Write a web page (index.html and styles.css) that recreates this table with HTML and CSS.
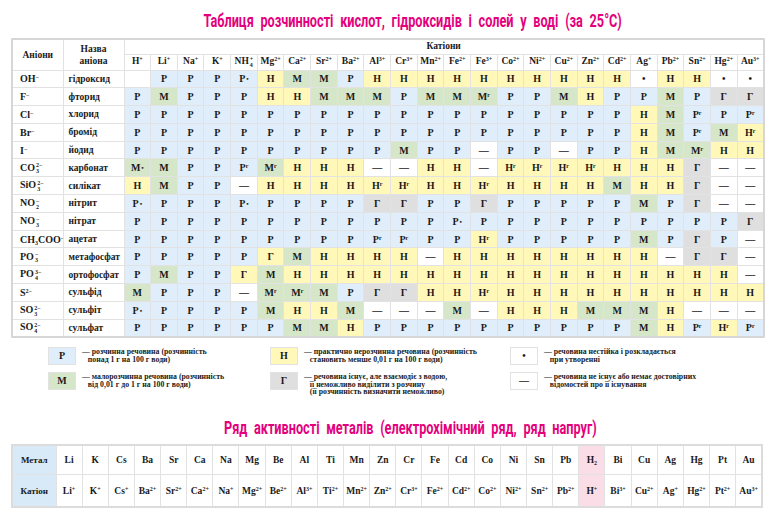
FILE: index.html
```html
<!DOCTYPE html>
<html lang="uk">
<head>
<meta charset="utf-8">
<title>Таблиця розчинності</title>
<link rel="stylesheet" href="styles.css">
</head>
<body>
<div class="page">
  <h1 class="title"><span class="tt">Таблиця розчинності кислот, гідроксидів і солей у воді (за 25°С)</span></h1>
  <table class="sol">
    <colgroup>
      <col class="w-an"><col class="w-nm">
      <col span="24" class="w-c">
    </colgroup>
    <thead>
      <tr class="h1">
        <th rowspan="2" class="an-h">Аніони</th>
        <th rowspan="2" class="nm-h">Назва<br>аніона</th>
        <th colspan="24" class="cat-h">Катіони</th>
      </tr>
      <tr class="h2">
        <th>H<sup>+</sup></th><th>Li<sup>+</sup></th><th>Na<sup>+</sup></th><th>K<sup>+</sup></th>
        <th>NH<span class="st"><span>+</span><span>4</span></span></th>
        <th>Mg<sup>2+</sup></th><th>Ca<sup>2+</sup></th><th>Sr<sup>2+</sup></th><th>Ba<sup>2+</sup></th><th>Al<sup>3+</sup></th>
        <th>Cr<sup>3+</sup></th><th>Mn<sup>2+</sup></th><th>Fe<sup>2+</sup></th><th>Fe<sup>3+</sup></th><th>Co<sup>2+</sup></th>
        <th>Ni<sup>2+</sup></th><th>Cu<sup>2+</sup></th><th>Zn<sup>2+</sup></th><th>Cd<sup>2+</sup></th><th>Ag<sup>+</sup></th>
        <th>Pb<sup>2+</sup></th><th>Sn<sup>2+</sup></th><th>Hg<sup>2+</sup></th><th>Au<sup>3+</sup></th>
      </tr>
    </thead>
    <tbody>
      <tr><td class="an">OH<sup>−</sup></td><td class="nm">гідроксид</td>
        <td></td><td class="p">Р</td><td class="p">Р</td><td class="p">Р</td><td class="p">Р<span class="dt">•</span></td><td class="n">Н</td><td class="m">М</td><td class="m">М</td><td class="p">Р</td><td class="n">Н</td>
        <td class="n">Н</td><td class="n">Н</td><td class="n">Н</td><td class="n">Н</td><td class="n">Н</td><td class="n">Н</td><td class="n">Н</td><td class="n">Н</td><td class="n">Н</td><td>•</td><td class="n">Н</td><td class="n">Н</td><td>•</td><td>•</td></tr>
      <tr><td class="an">F<sup>−</sup></td><td class="nm">фторид</td>
        <td class="p">Р</td><td class="m">М</td><td class="p">Р</td><td class="p">Р</td><td class="p">Р</td><td class="n">Н</td><td class="n">Н</td><td class="m">М</td><td class="m">М</td><td class="m">М</td>
        <td class="p">Р</td><td class="m">М</td><td class="m">М</td><td class="m">М<sup>г</sup></td><td class="p">Р</td><td class="p">Р</td><td class="m">М</td><td class="n">Н</td><td class="p">Р</td><td class="p">Р</td><td class="m">М</td><td class="p">Р</td><td class="g">Г</td><td class="g">Г</td></tr>
      <tr><td class="an">Cl<sup>−</sup></td><td class="nm">хлорид</td>
        <td class="p">Р</td><td class="p">Р</td><td class="p">Р</td><td class="p">Р</td><td class="p">Р</td><td class="p">Р</td><td class="p">Р</td><td class="p">Р</td><td class="p">Р</td><td class="p">Р</td>
        <td class="p">Р</td><td class="p">Р</td><td class="p">Р</td><td class="p">Р</td><td class="p">Р</td><td class="p">Р</td><td class="p">Р</td><td class="p">Р</td><td class="p">Р</td><td class="n">Н</td><td class="m">М</td><td class="p">Р<sup>г</sup></td><td class="p">Р</td><td class="p">Р<sup>г</sup></td></tr>
      <tr><td class="an">Br<sup>−</sup></td><td class="nm">бромід</td>
        <td class="p">Р</td><td class="p">Р</td><td class="p">Р</td><td class="p">Р</td><td class="p">Р</td><td class="p">Р</td><td class="p">Р</td><td class="p">Р</td><td class="p">Р</td><td class="p">Р</td>
        <td class="p">Р</td><td class="p">Р</td><td class="p">Р</td><td class="p">Р</td><td class="p">Р</td><td class="p">Р</td><td class="p">Р</td><td class="p">Р</td><td class="p">Р</td><td class="n">Н</td><td class="m">М</td><td class="p">Р<sup>г</sup></td><td class="m">М</td><td class="n">Н<sup>г</sup></td></tr>
      <tr><td class="an">I<sup>−</sup></td><td class="nm">йодид</td>
        <td class="p">Р</td><td class="p">Р</td><td class="p">Р</td><td class="p">Р</td><td class="p">Р</td><td class="p">Р</td><td class="p">Р</td><td class="p">Р</td><td class="p">Р</td><td class="p">Р</td>
        <td class="m">М</td><td class="p">Р</td><td class="p">Р</td><td>—</td><td class="p">Р</td><td class="p">Р</td><td>—</td><td class="p">Р</td><td class="p">Р</td><td class="n">Н</td><td class="m">М</td><td class="m">М<sup>г</sup></td><td class="n">Н</td><td class="n">Н</td></tr>
      <tr><td class="an">CO<span class="st"><span>2−</span><span>3</span></span></td><td class="nm">карбонат</td>
        <td class="m">М<span class="dt">•</span></td><td class="m">М</td><td class="p">Р</td><td class="p">Р</td><td class="p">Р<sup>г</sup></td><td class="m">М<sup>г</sup></td><td class="n">Н</td><td class="n">Н</td><td class="n">Н</td><td>—</td>
        <td>—</td><td class="n">Н</td><td class="n">Н</td><td>—</td><td class="n">Н<sup>г</sup></td><td class="n">Н<sup>г</sup></td><td class="n">Н<sup>г</sup></td><td class="n">Н<sup>г</sup></td><td class="n">Н</td><td class="n">Н</td><td class="n">Н</td><td class="g">Г</td><td>—</td><td>—</td></tr>
      <tr><td class="an">SiO<span class="st"><span>2−</span><span>3</span></span></td><td class="nm">силікат</td>
        <td class="n">Н</td><td class="m">М</td><td class="p">Р</td><td class="p">Р</td><td>—</td><td class="n">Н</td><td class="n">Н</td><td class="n">Н</td><td class="n">Н</td><td class="n">Н<sup>г</sup></td>
        <td class="n">Н<sup>г</sup></td><td class="n">Н</td><td class="n">Н</td><td class="n">Н<sup>г</sup></td><td class="n">Н</td><td class="n">Н</td><td class="n">Н</td><td class="n">Н</td><td class="m">М</td><td class="n">Н</td><td class="n">Н</td><td class="g">Г</td><td>—</td><td>—</td></tr>
      <tr><td class="an">NO<span class="st"><span>−</span><span>2</span></span></td><td class="nm">нітрит</td>
        <td class="p">Р<span class="dt">•</span></td><td class="p">Р</td><td class="p">Р</td><td class="p">Р</td><td class="p">Р<span class="dt">•</span></td><td class="p">Р</td><td class="p">Р</td><td class="p">Р</td><td class="p">Р</td><td class="g">Г</td>
        <td class="g">Г</td><td class="p">Р</td><td class="p">Р</td><td class="g">Г</td><td class="p">Р</td><td class="p">Р</td><td class="p">Р</td><td class="p">Р</td><td class="p">Р</td><td class="m">М</td><td class="p">Р</td><td class="g">Г</td><td>—</td><td>—</td></tr>
      <tr><td class="an">NO<span class="st"><span>−</span><span>3</span></span></td><td class="nm">нітрат</td>
        <td class="p">Р</td><td class="p">Р</td><td class="p">Р</td><td class="p">Р</td><td class="p">Р</td><td class="p">Р</td><td class="p">Р</td><td class="p">Р</td><td class="p">Р</td><td class="p">Р</td>
        <td class="p">Р</td><td class="p">Р</td><td class="p">Р<span class="dt">•</span></td><td class="p">Р</td><td class="p">Р</td><td class="p">Р</td><td class="p">Р</td><td class="p">Р</td><td class="p">Р</td><td class="p">Р</td><td class="p">Р</td><td class="p">Р</td><td class="p">Р</td><td class="g">Г</td></tr>
      <tr><td class="an">CH<sub>3</sub>COO<sup>−</sup></td><td class="nm">ацетат</td>
        <td class="p">Р</td><td class="p">Р</td><td class="p">Р</td><td class="p">Р</td><td class="p">Р</td><td class="p">Р</td><td class="p">Р</td><td class="p">Р</td><td class="p">Р</td><td class="p">Р<sup>г</sup></td>
        <td class="p">Р<sup>г</sup></td><td class="p">Р</td><td class="p">Р</td><td class="n">Н<sup>г</sup></td><td class="p">Р</td><td class="p">Р</td><td class="p">Р</td><td class="p">Р</td><td class="p">Р</td><td class="m">М</td><td class="p">Р</td><td class="g">Г</td><td class="p">Р</td><td>—</td></tr>
      <tr><td class="an">PO<span class="st"><span>−</span><span>3</span></span></td><td class="nm">метафосфат</td>
        <td class="p">Р</td><td class="p">Р</td><td class="p">Р</td><td class="p">Р</td><td class="p">Р</td><td class="n">Г</td><td class="m">М</td><td class="n">Н</td><td class="n">Н</td><td class="n">Н</td>
        <td class="n">Н</td><td>—</td><td class="n">Н</td><td class="n">Н</td><td class="n">Н</td><td class="n">Н</td><td class="n">Н</td><td class="n">Н</td><td class="n">Н</td><td class="n">Н</td><td>—</td><td class="g">Г</td><td class="g">Г</td><td>—</td></tr>
      <tr><td class="an">PO<span class="st"><span>3−</span><span>4</span></span></td><td class="nm">ортофосфат</td>
        <td class="p">Р</td><td class="m">М</td><td class="p">Р</td><td class="p">Р</td><td class="n">Г</td><td class="m">М</td><td class="n">Н</td><td class="n">Н</td><td class="n">Н</td><td class="n">Н</td>
        <td class="n">Н</td><td class="n">Н</td><td class="n">Н</td><td class="n">Н</td><td class="n">Н</td><td class="n">Н</td><td class="n">Н</td><td class="n">Н</td><td class="n">Н</td><td class="n">Н</td><td class="n">Н</td><td class="n">Н</td><td class="n">Н</td><td>—</td></tr>
      <tr><td class="an">S<sup>2−</sup></td><td class="nm">сульфід</td>
        <td class="m">М</td><td class="p">Р</td><td class="p">Р</td><td class="p">Р</td><td>—</td><td class="m">М<sup>г</sup></td><td class="m">М<sup>г</sup></td><td class="m">М</td><td class="p">Р</td><td class="g">Г</td>
        <td class="g">Г</td><td class="n">Н</td><td class="n">Н</td><td class="n">Н<sup>г</sup></td><td class="n">Н</td><td class="n">Н</td><td class="n">Н</td><td class="n">Н</td><td class="n">Н</td><td class="n">Н</td><td class="n">Н</td><td class="n">Н</td><td class="n">Н</td><td class="n">Н</td></tr>
      <tr><td class="an">SO<span class="st"><span>2−</span><span>3</span></span></td><td class="nm">сульфіт</td>
        <td class="p">Р<span class="dt">•</span></td><td class="p">Р</td><td class="p">Р</td><td class="p">Р</td><td class="p">Р</td><td class="m">М</td><td class="n">Н</td><td class="n">Н</td><td class="m">М</td><td>—</td>
        <td>—</td><td>—</td><td class="m">М</td><td>—</td><td class="n">Н</td><td class="n">Н</td><td class="n">Н</td><td class="m">М</td><td class="m">М</td><td class="m">М</td><td class="n">Н</td><td>—</td><td>—</td><td>—</td></tr>
      <tr><td class="an">SO<span class="st"><span>2−</span><span>4</span></span></td><td class="nm">сульфат</td>
        <td class="p">Р</td><td class="p">Р</td><td class="p">Р</td><td class="p">Р</td><td class="p">Р</td><td class="p">Р</td><td class="m">М</td><td class="m">М</td><td class="n">Н</td><td class="p">Р</td>
        <td class="p">Р</td><td class="p">Р</td><td class="p">Р</td><td class="p">Р</td><td class="p">Р</td><td class="p">Р</td><td class="p">Р</td><td class="p">Р</td><td class="p">Р</td><td class="m">М</td><td class="n">Н</td><td class="p">Р<sup>г</sup></td><td class="n">Н<sup>г</sup></td><td class="p">Р<sup>г</sup></td></tr>
    </tbody>
  </table>

  <div class="legend">
    <div class="lg-col c1">
      <div class="lg-item"><span class="box p">Р</span><span class="lg-text">— розчинна речовина (розчинність<br>&nbsp;&nbsp;&nbsp;понад 1 г на 100 г води)</span></div>
      <div class="lg-item"><span class="box m">М</span><span class="lg-text">— малорозчинна речовина (розчинність<br>&nbsp;&nbsp;&nbsp;від 0,01 г до 1 г на 100 г води)</span></div>
    </div>
    <div class="lg-col c2">
      <div class="lg-item"><span class="box n">Н</span><span class="lg-text">— практично нерозчинна речовина (розчинність<br>&nbsp;&nbsp;&nbsp;становить менше 0,01 г на 100 г води)</span></div>
      <div class="lg-item"><span class="box g">Г</span><span class="lg-text">— речовина існує, але взаємодіє з водою,<br>&nbsp;&nbsp;&nbsp;її неможливо виділити з розчину<br>&nbsp;&nbsp;&nbsp;(її розчинність визначити неможливо)</span></div>
    </div>
    <div class="lg-col c3">
      <div class="lg-item"><span class="box w">•</span><span class="lg-text">— речовина нестійка і розкладається<br>&nbsp;&nbsp;&nbsp;при утворенні</span></div>
      <div class="lg-item"><span class="box w">—</span><span class="lg-text">— речовина не існує або немає достовірних<br>&nbsp;&nbsp;&nbsp;відомостей про її існування</span></div>
    </div>
  </div>

  <h2 class="title t2"><span class="tt">Ряд активності металів (електрохімічний ряд, ряд напруг)</span></h2>
  <table class="act">
    <colgroup><col class="w-hd"><col span="27" class="w-m"></colgroup>
    <tr>
      <th class="hd">Метал</th>
      <td>Li</td><td>K</td><td>Cs</td><td>Ba</td><td>Sr</td><td>Ca</td><td>Na</td><td>Mg</td><td>Be</td><td>Al</td><td>Ti</td><td>Mn</td><td>Zn</td><td>Cr</td><td>Fe</td><td>Cd</td><td>Co</td><td>Ni</td><td>Sn</td><td>Pb</td><td class="hy">H<sub>2</sub></td><td>Bi</td><td>Cu</td><td>Ag</td><td>Hg</td><td>Pt</td><td>Au</td>
    </tr>
    <tr>
      <th class="hd">Катіон</th>
      <td>Li<sup>+</sup></td><td>K<sup>+</sup></td><td>Cs<sup>+</sup></td><td>Ba<sup>2+</sup></td><td>Sr<sup>2+</sup></td><td>Ca<sup>2+</sup></td><td>Na<sup>+</sup></td><td>Mg<sup>2+</sup></td><td>Be<sup>2+</sup></td><td>Al<sup>3+</sup></td><td>Ti<sup>2+</sup></td><td>Mn<sup>2+</sup></td><td>Zn<sup>2+</sup></td><td>Cr<sup>3+</sup></td><td>Fe<sup>2+</sup></td><td>Cd<sup>2+</sup></td><td>Co<sup>2+</sup></td><td>Ni<sup>2+</sup></td><td>Sn<sup>2+</sup></td><td>Pb<sup>2+</sup></td><td class="hy">H<sup>+</sup></td><td>Bi<sup>3+</sup></td><td>Cu<sup>2+</sup></td><td>Ag<sup>+</sup></td><td>Hg<sup>2+</sup></td><td>Pt<sup>2+</sup></td><td>Au<sup>3+</sup></td>
    </tr>
  </table>
</div>
</body>
</html>
```

FILE: styles.css
```css
* { box-sizing: border-box; }
body {
  margin: 0;
  background: #fff;
  color: #1a1a1a;
  font-family: "Liberation Serif", "DejaVu Serif", serif;
}
.page {
  width: 776px;
  padding: 0 13px 0 11px;
}
.title {
  margin: 0;
  color: #e4007c;
  font-family: "Roboto", "DejaVu Sans", sans-serif;
  font-weight: 700;
  font-size: 18px;
  text-align: center;
  word-spacing: 5px;
  padding-left: 52px;
  height: 38px;
  line-height: 42px;
  white-space: nowrap;
}
.tt {
  display: inline-block;
  transform: scaleX(0.705);
  transform-origin: center;
}
.t2 {
  height: auto;
  line-height: 20px;
  padding-left: 46px;
  margin-top: 18px;
  margin-bottom: 6px;
}

/* solubility table */
.sol {
  width: 752px;
  border-collapse: collapse;
  table-layout: fixed;
  border: 2px solid #d6d6d6;
}
.w-an { width: 51px; }
.w-nm { width: 61px; }
.w-c { width: 26.66px; }
.sol th, .sol td {
  border: 1px solid #e2e2e2;
  padding: 0;
  font-weight: 700;
  text-align: center;
  white-space: nowrap;
  overflow: hidden;
}
.sol thead th { font-size: 9.5px; line-height: 1; }
.sol tr.h1 { height: 15px; }
.sol tr.h2 { height: 16px; }
.sol tbody tr { height: 17.8px; }
.sol td { font-size: 10px; }
.an-h, .nm-h { font-size: 9.5px !important; line-height: 12px !important; }
.sol td.an { text-align: left; padding-left: 7px; font-size: 10px; }
.sol td.nm { text-align: left; padding-left: 5px; font-size: 9.5px; }
sup { font-size: 6px; vertical-align: 3px; line-height: 0; }
sub { font-size: 6px; vertical-align: -2px; line-height: 0; }
.st {
  display: inline-block;
  vertical-align: middle;
  font-size: 6px;
  line-height: 6px;
  text-align: left;
  margin-left: 1px;
}
.st span { display: block; }
.dt { font-size: 7px; margin-left: 1px; vertical-align: 1px; }
.p { background: #dfeefa; }
.m { background: #d6e7c9; }
.n { background: #fff8b8; }
.g { background: #dfdfdf; }
.w { background: #fff; }

/* legend */
.legend {
  display: grid;
  grid-template-columns: 222px 240px auto;
  padding-left: 37px;
  margin-top: 9px;
}
.lg-col { display: flex; flex-direction: column; gap: 7px; }
.lg-item { display: flex; align-items: flex-start; gap: 6px; height: 18px; }
.lg-item + .lg-item { height: 28px; }
.box {
  flex: 0 0 28px;
  height: 18px;
  border: 1px solid #e2e2e2;
  display: flex;
  align-items: center;
  justify-content: center;
  font-weight: 700;
  font-size: 10px;
}
.lg-text {
  font-size: 7.8px;
  line-height: 7.7px;
  font-weight: 700;
  padding-top: 1px;
  white-space: nowrap;
  color: #222;
}

/* activity series */
.act {
  width: 752px;
  border-collapse: collapse;
  table-layout: fixed;
  border: 2px solid #dcdcdc;
}
.w-hd { width: 44px; }
.act tr:first-child { height: 30px; }
.act tr + tr { height: 32px; }
.act th, .act td {
  border: 1px solid #e2e2e2;
  padding: 0;
  font-size: 9.5px;
  font-weight: 700;
  text-align: center;
  white-space: nowrap;
}
.act th.hd { background: #d8eaf7; font-size: 9px; }
.act td.hy { background: #fadde6; }
```
